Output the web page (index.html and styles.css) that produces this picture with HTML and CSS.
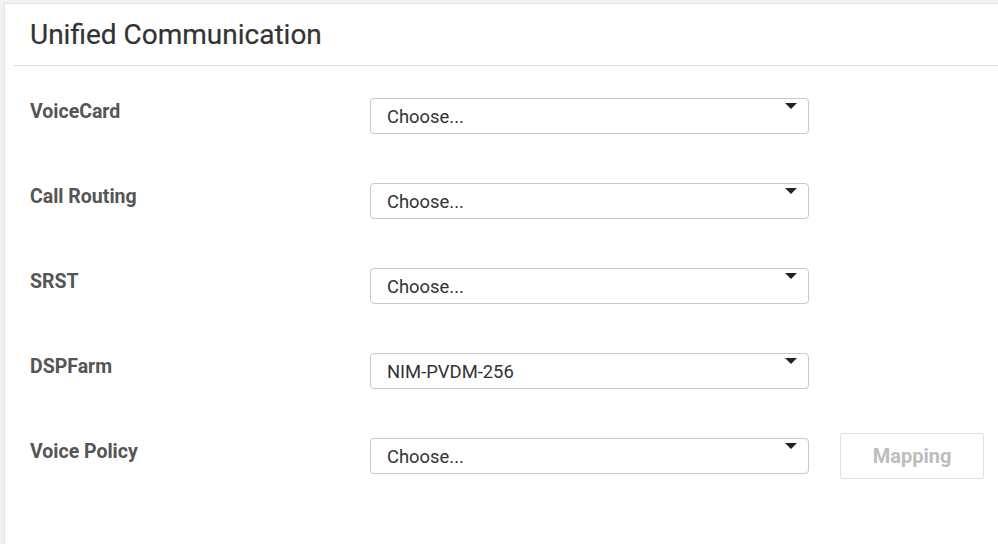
FILE: index.html
```html
<!DOCTYPE html>
<html>
<head>
<meta charset="utf-8">
<link rel="stylesheet" href="styles.css">
</head>
<body>
<div class="card">
  <div class="card-header">
    <h1 class="title">Unified Communication</h1>
  </div>
  <div class="form">
    <div class="row">
      <div class="label">VoiceCard</div>
      <div class="select"><span class="value">Choose...</span><span class="caret"></span></div>
    </div>
    <div class="row">
      <div class="label">Call Routing</div>
      <div class="select"><span class="value">Choose...</span><span class="caret"></span></div>
    </div>
    <div class="row">
      <div class="label">SRST</div>
      <div class="select"><span class="value">Choose...</span><span class="caret"></span></div>
    </div>
    <div class="row">
      <div class="label">DSPFarm</div>
      <div class="select"><span class="value">NIM-PVDM-256</span><span class="caret"></span></div>
    </div>
    <div class="row">
      <div class="label">Voice Policy</div>
      <div class="select"><span class="value">Choose...</span><span class="caret"></span></div>
      <button class="btn-mapping" disabled>Mapping</button>
    </div>
  </div>
</div>
</body>
</html>
```
FILE: styles.css
```css
html, body {
  margin: 0;
  padding: 0;
  height: 100%;
}
body {
  background: #f2f2f2;
  font-family: Roboto, "Liberation Sans", sans-serif;
  overflow: hidden;
}
.card {
  margin: 3px 0 0 4px;
  background: #ffffff;
  border-top: 1px solid #e4e4e4;
  border-left: 1px solid #e4e4e4;
  height: calc(100% - 3px);
  box-sizing: border-box;
}
.card-header {
  margin-left: 9px;
  border-bottom: 1px solid #dcdcdc;
  height: 62px;
  box-sizing: border-box;
  padding-left: 16px;
  padding-top: 3px;
  display: flex;
  align-items: center;
}
.title {
  margin: 0;
  font-size: 28px;
  font-weight: 400;
  color: #333333;
  line-height: 1;
  padding-bottom: 2px;
  -webkit-text-stroke: 0.2px #333333;
}
.form {
  padding: 32px 0 0 25px;
  display: flex;
  flex-direction: column;
  gap: 49px;
}
.row {
  display: flex;
  align-items: flex-start;
  height: 36px;
}
.label {
  width: 340px;
  font-size: 19.5px;
  font-weight: 700;
  color: #555555;
  line-height: 22px;
  padding-top: 3px;
}
.select {
  position: relative;
  width: 439px;
  height: 36px;
  box-sizing: border-box;
  border: 1px solid #c8c8c8;
  border-radius: 4px;
  padding: 0 16px;
  display: flex;
  align-items: center;
  font-size: 18.4px;
  color: #333333;
  background: #fff;
}
.value {
  padding-top: 1px;
}
.caret {
  position: absolute;
  right: 11px;
  top: 4px;
  width: 0;
  height: 0;
  border-left: 6px solid transparent;
  border-right: 6px solid transparent;
  border-top: 6px solid #222222;
}
.btn-mapping {
  margin-left: 31px;
  margin-top: -5px;
  width: 144px;
  height: 46px;
  box-sizing: border-box;
  border: 1px solid #dedede;
  border-radius: 3px;
  background: #ffffff;
  font-family: Roboto, "Liberation Sans", sans-serif;
  font-size: 20px;
  font-weight: 700;
  color: #bdbdbd;
  padding: 0;
}
```
